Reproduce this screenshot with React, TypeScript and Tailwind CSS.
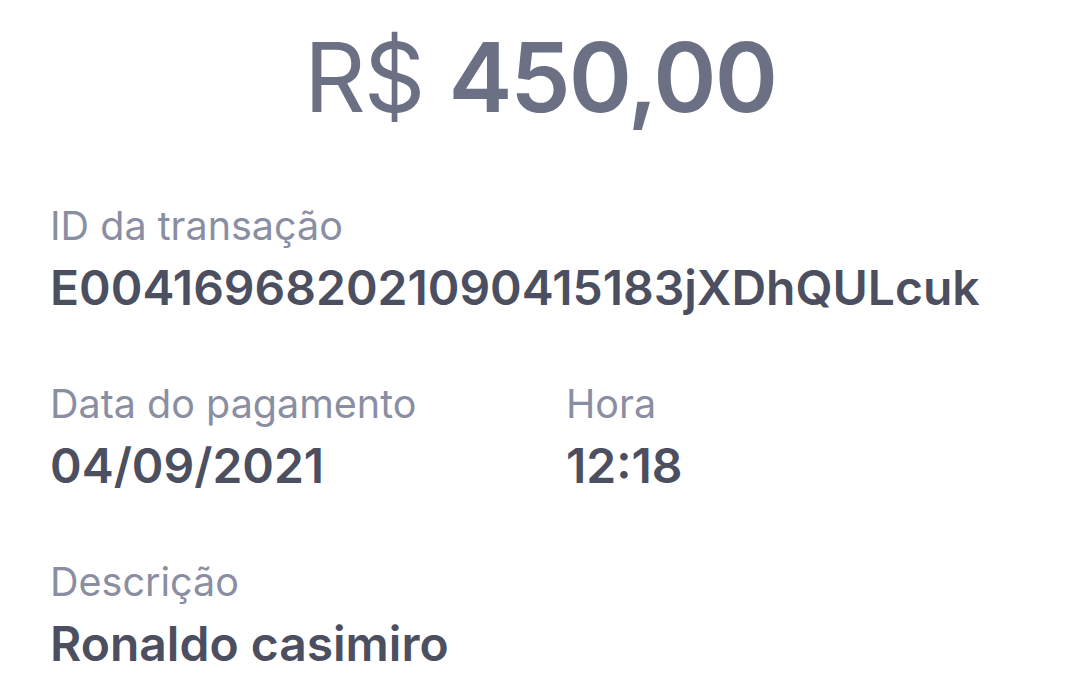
export default function App() {
  const label = "text-[39.5px] leading-[48px] text-[#8a8ea3]";
  const value = "text-[48px] leading-[56px] font-semibold text-[#4b4f5f]";
  return (
    <div className="w-[1080px] h-[675px] overflow-hidden bg-white font-['Inter',sans-serif]">
      <div className="flex justify-center pt-[19px]">
        <span className="text-[96px] leading-[116px] text-[#6b7084] tracking-[-2px]">
          R$ <span className="font-semibold">450,00</span>
        </span>
      </div>
      <div className="flex flex-col gap-[64px] px-[50px] pt-[67px]">
        <div className="flex flex-col gap-[10px]">
          <span className={label}>ID da transação</span>
          <span className={value}>{"E004169682021090415183jXDhQULcuk"}</span>
        </div>
        <div className="flex">
          <div className="flex flex-col gap-[10px] w-[516px]">
            <span className={label}>Data do pagamento</span>
            <span className={value}>04/09/2021</span>
          </div>
          <div className="flex flex-col gap-[10px]">
            <span className={label}>Hora</span>
            <span className={value}>12:18</span>
          </div>
        </div>
        <div className="flex flex-col gap-[10px]">
          <span className={label}>Descrição</span>
          <span className={value}>Ronaldo casimiro</span>
        </div>
      </div>
    </div>
  );
}
